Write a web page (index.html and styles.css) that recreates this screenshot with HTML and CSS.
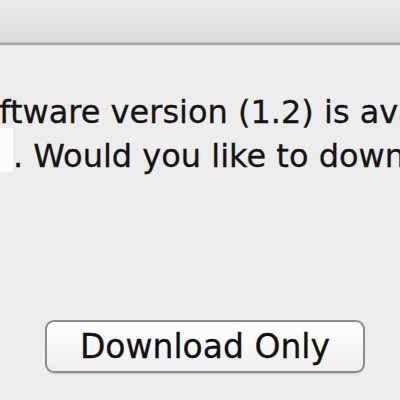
FILE: index.html
```html
<!DOCTYPE html>
<html>
<head>
<meta charset="utf-8">
<link rel="stylesheet" href="styles.css">
</head>
<body>
<div class="window">
  <div class="titlebar"></div>
  <div class="content">
    <p class="msg">
      <span class="line first">software version (1.2) is available</span>
      <span class="line"><span class="redact"></span>. Would you like to download it now?</span>
    </p>
    <div class="buttons">
      <button class="btn">Download Only</button>
    </div>
  </div>
</div>
</body>
</html>
```

FILE: styles.css
```css
html, body {
  margin: 0;
  padding: 0;
  width: 400px;
  height: 400px;
  overflow: hidden;
  background: #ededed;
}
.window {
  width: 400px;
  height: 400px;
  overflow: hidden;
  display: flex;
  flex-direction: column;
}
.titlebar {
  height: 42px;
  flex: none;
  background: linear-gradient(#ececec, #dcdcdc);
  border-bottom: 1px solid #c6c6c6;
  box-shadow: 0 1px 0 #a2a2a2, 0 2px 0 #a8a8a8, 0 3px 0 #dedede;
}
.content {
  flex: 1;
  overflow: hidden;
  padding-top: 47px;
}
.msg {
  margin: 0;
  font-family: "DejaVu Sans", sans-serif;
  font-size: 32px;
  line-height: 44px;
  color: #141414;
  white-space: nowrap;
  -webkit-text-stroke: 0.3px #141414;
}
.line {
  display: block;
  height: 44px;
}
.first {
  margin-left: -37px;
}
.redact {
  display: inline-block;
  width: 13px;
  height: 44px;
  background: #fbfbfb;
  vertical-align: -5px;
  margin-top: -6px;
}
.buttons {
  margin-top: 142px;
  padding-left: 45px;
}
.btn {
  width: 320px;
  height: 53px;
  box-sizing: border-box;
  border: 2px solid #8c8c8c;
  border-radius: 9px;
  background: linear-gradient(#ffffff, #f6f6f6 60%, #efefef);
  box-shadow: 0 1px 1px rgba(0,0,0,0.15);
  font-family: "DejaVu Sans", sans-serif;
  font-size: 33px;
  color: #111;
  padding: 0;
  -webkit-text-stroke: 0.3px #111;
}
```
